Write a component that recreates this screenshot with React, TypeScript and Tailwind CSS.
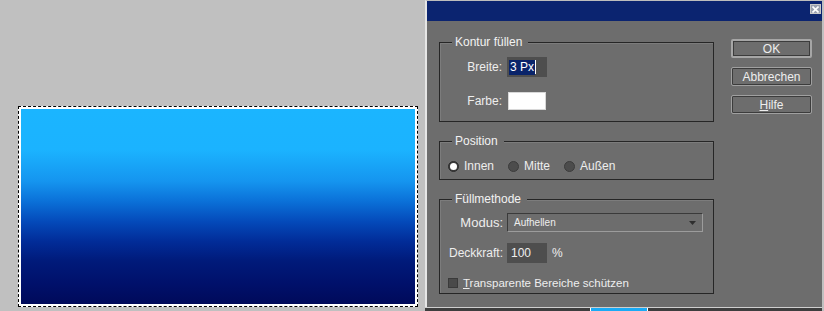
import React from "react";

function Frame({ title, className, children }: { title: string; className: string; children: React.ReactNode }) {
  return (
    <div className={`relative border border-[#262626] shadow-[inset_1px_1px_0_#7c7c7c] ${className}`}>
      <span className="absolute left-[12px] -top-[8px] bg-[#6d6d6d] pl-[3px] pr-[6px] leading-[14px] text-[#f2f2f2]">
        {title}
      </span>
      {children}
    </div>
  );
}

function Radio({ checked, label }: { checked?: boolean; label: string }) {
  return (
    <div className="flex items-center">
      <div
        className={`w-[11px] h-[11px] rounded-full border flex items-center justify-center ${
          checked ? "border-[#2e2e2e] bg-[#3a3a3a]" : "border-[#3c3c3c] bg-[#4c4c4c]"
        }`}
      >
        {checked && <div className="w-[7px] h-[7px] rounded-full bg-white" />}
      </div>
      <span className="ml-[5px] leading-[14px]">{label}</span>
    </div>
  );
}

export default function App() {
  return (
    <div className="w-[824px] h-[311px] bg-[#c0c0c0] flex overflow-hidden font-['Liberation_Sans',Arial,sans-serif] text-[12px] text-[#eeeeee]">
      {/* canvas */}
      <div className="w-[425px] shrink-0 pl-[18px] pt-[106px]">
        <div className="w-[400px] h-[201px] bg-white border border-dashed border-black p-[2px]">
          <div className="w-full h-full bg-[linear-gradient(to_bottom,#1bb5ff_0%,#1bb3ff_21%,#1595ef_37%,#0b72d9_47%,#0449b9_58%,#012c98_68%,#001a7a_78%,#00106a_90%,#000a5a_100%)]" />
        </div>
      </div>

      {/* dialog */}
      <div className="w-[397px] shrink-0 flex flex-col">
        <div className="h-[307px] bg-[#6d6d6d] border-l-2 border-t border-l-[#e6e6e6] border-t-[#bdbdbd] flex flex-col">
          <div className="h-[20px] bg-[#0b2470] flex justify-end items-start pt-[3px] pr-[1px]">
            <div className="w-[11px] h-[10px] bg-[#9aa0b0] border border-[#c8c8c8] flex items-center justify-center">
              <svg width="7" height="7" viewBox="0 0 7 7">
                <path d="M0.5 0.5 L6.5 6.5 M6.5 0.5 L0.5 6.5" stroke="#ffffff" strokeWidth="1.6" />
              </svg>
            </div>
          </div>

          <div className="flex pl-[12px] pt-[18px]">
            <div className="w-[275px] pt-[3px] flex flex-col gap-[19px]">
              <Frame title="Kontur füllen" className="h-[80px]">
                <div className="flex flex-col pt-[14px] gap-[15px]">
                  <div className="flex items-center">
                    <span className="w-[62px] text-right">Breite:</span>
                    <div className="ml-[5px] w-[40px] h-[20px] bg-[#4e4e4e] flex items-center pl-[2px]">
                      <span className="bg-[#0a246a] text-white leading-[15px] px-[1px]">3 Px</span>
                      <span className="w-[1px] h-[14px] bg-white" />
                    </div>
                  </div>
                  <div className="flex items-center">
                    <span className="w-[62px] text-right">Farbe:</span>
                    <div className="ml-[6px] w-[38px] h-[18px] bg-white border border-[#d8d8d8]" />
                  </div>
                </div>
              </Frame>

              <Frame title="Position" className="h-[39px]">
                <div className="flex items-center pl-[8px] pt-[18px] gap-[14px] h-[30px]">
                  <Radio checked label="Innen" />
                  <Radio label="Mitte" />
                  <Radio label="Außen" />
                </div>
              </Frame>

              <Frame title="Füllmethode" className="h-[95px]">
                <div className="flex flex-col pt-[13px]">
                  <div className="flex items-center">
                    <span className="w-[63px] text-right text-[13px]">Modus:</span>
                    <div className="ml-[4px] w-[196px] h-[19px] border border-t-[#3a3a3a] border-l-[#3a3a3a] border-b-[#9c9c9c] border-r-[#9c9c9c] flex items-center pl-[6px] pr-[6px]">
                      <span className="text-[10px] flex-1">Aufhellen</span>
                      <svg width="7" height="4" viewBox="0 0 7 4">
                        <path d="M0 0 L7 0 L3.5 4 Z" fill="#2e2e2e" />
                      </svg>
                    </div>
                  </div>
                  <div className="flex items-center mt-[10px]">
                    <span className="w-[63px] text-right">Deckkraft:</span>
                    <div className="ml-[4px] w-[40px] h-[20px] bg-[#4e4e4e] flex items-center pl-[4px]">100</div>
                    <span className="ml-[5px]">%</span>
                  </div>
                  <div className="flex items-center mt-[12px] pl-[8px]">
                    <div className="w-[10px] h-[10px] bg-[#4a4a4a] border border-[#3a3a3a]" />
                    <span className="ml-[5px] text-[11.5px]">
                      <span className="underline">T</span>ransparente Bereiche schützen
                    </span>
                  </div>
                </div>
              </Frame>
            </div>

            <div className="ml-[17px] w-[81px] flex flex-col gap-[9px]">
              <div className="h-[19px] border-2 border-[#a6a6a6] rounded-[2px] shadow-[inset_0_0_0_1px_#3c3c3c] flex items-center justify-center">
                OK
              </div>
              <div className="h-[19px] border border-[#a0a0a0] rounded-[2px] shadow-[inset_0_0_0_1px_#3c3c3c] flex items-center justify-center">
                Abbrechen
              </div>
              <div className="h-[19px] border border-[#a0a0a0] rounded-[2px] shadow-[inset_0_0_0_1px_#3c3c3c] flex items-center justify-center">
                <span>
                  <span className="underline">H</span>ilfe
                </span>
              </div>
            </div>
          </div>
        </div>
        <div className="h-[4px] border-t border-[#cfcfcf] bg-[#3e3e3e] flex">
          <div className="w-[165px]" />
          <div className="w-[58px] h-full bg-[#1aaaf5] border-x border-white" />
        </div>
      </div>
    </div>
  );
}
